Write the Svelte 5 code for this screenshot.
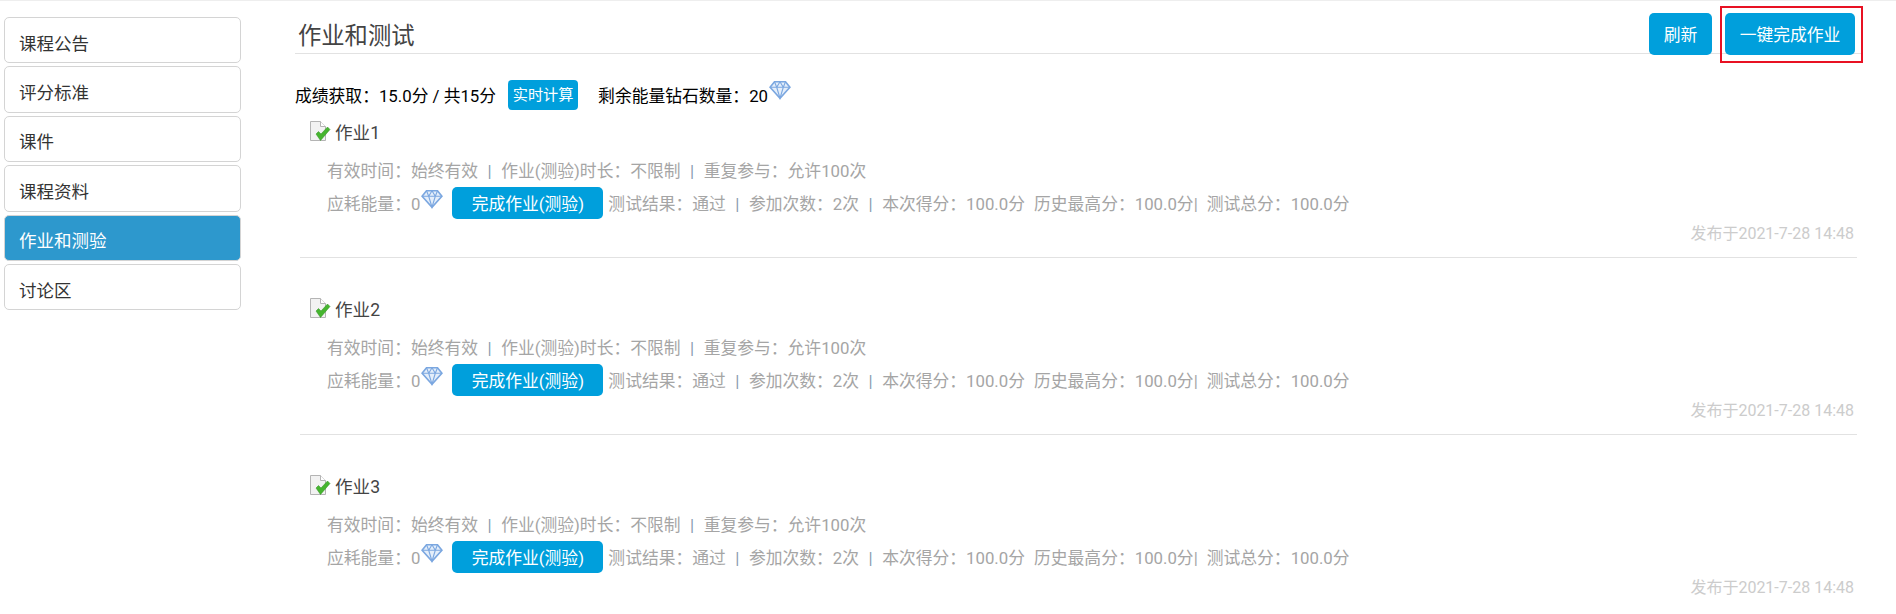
<script>
	const menu = ['课程公告', '评分标准', '课件', '课程资料', '作业和测验', '讨论区'];
	const tasks = ['作业1', '作业2', '作业3'];
</script>

{#snippet diamond()}
	<svg class="gem" viewBox="0 0 20 18" width="22" height="20" fill="none" stroke="#7ba7e0" stroke-width="1.5">
		<path d="M5 1.500h10l4 5-9 10-9-10z" fill="#e4eefa" />
		<path d="M1 6.500h18M7 6.500l3 10 3-10M5 1.500l2 5 3-5 3 5 2-5" stroke-width="1" />
	</svg>
{/snippet}

<div class="page">
	<nav class="side">
		{#each menu as name}
			<a class="menu-item" class:active={name === '作业和测验'} href="#top">{name}</a>
		{/each}
	</nav>

	<main class="main">
		<header class="head">
			<h1>作业和测试</h1>
			<div class="actions">
				<button class="btn">刷新</button>
				<button class="btn wide">一键完成作业</button>
				<span class="mark"></span>
			</div>
		</header>

		<div class="score">
			<span>成绩获取：15.0分 / 共15分</span>
			<span class="badge">实时计算</span>
			<span class="left">剩余能量钻石数量：20</span>
			{@render diamond()}
		</div>

		{#each tasks as task}
			<section class="task">
				<div class="title">
					<svg class="doc" viewBox="0 0 22 22" width="22" height="22">
						<path d="M1.500 1.500h10l5 5v14h-15z" fill="#f2f2f2" stroke="#b4b4b4" />
						<path d="M11.500 1.500v5h5" fill="#fff" stroke="#b4b4b4" />
						<path d="M7 14l2.500-2.500 2.500 2.500L18.500 7l2.500 2.500-9.500 11z" fill="#46b52f" stroke="#2f8f20" stroke-width="0.5" />
					</svg>
					<span>{task}</span>
				</div>
				<div class="line first">有效时间：始终有效<i>|</i>作业(测验)时长：不限制<i>|</i>重复参与：允许100次</div>
				<div class="line second">
					<span>应耗能量：0</span>
					{@render diamond()}
					<button class="do">完成作业(测验)</button>
					<span>测试结果：通过<i>|</i>参加次数：2次<i>|</i>本次得分：100.0分<b></b>历史最高分：100.0分|<b></b>测试总分：100.0分</span>
				</div>
				<div class="date">发布于2021-7-28 14:48</div>
			</section>
		{/each}
	</main>
</div>

<style>
	:global(body) {
		margin: 0;
		background: #fff;
		font-family: Roboto, "Noto Sans CJK SC", sans-serif;
	}

	.page {
		display: flex;
		height: 614px;
		box-sizing: border-box;
		overflow: hidden;
		border-top: 1px solid #eee;
		padding-left: 4px;
	}

	.side {
		width: 237px;
		padding-top: 16px;
		flex: none;
	}

	.menu-item {
		display: flex;
		align-items: center;
		box-sizing: border-box;
		height: 46.4px;
		margin-bottom: 3px;
		padding: 4px 0 0 14px;
		border: 1px solid #d4d4d4;
		border-radius: 5px;
		color: #333;
		font-size: 17.5px;
		text-decoration: none;
	}

	.menu-item.active {
		background: #2d98cd;
		color: #fff;
	}

	.main {
		flex: 1;
		margin-left: 54px;
		margin-right: 34px;
		min-width: 0;
	}

	.head {
		display: flex;
		justify-content: space-between;
		height: 52px;
		border-bottom: 1px solid #e2e2e2;
	}

	h1 {
		margin: 20px 0 0 3px;
		color: #444;
		font-size: 23.3px;
		font-weight: 400;
		line-height: 30px;
	}

	.actions {
		position: relative;
		display: flex;
		gap: 13px;
		margin: 12px 7px 0 0;
		height: 42px;
	}

	.btn {
		width: 63px;
		height: 42px;
		padding: 0;
		border: 0;
		border-radius: 5px;
		background: #009fdc;
		color: #fff;
		font: inherit;
		font-size: 16.8px;
	}

	.btn.wide {
		width: 130px;
	}

	.mark {
		position: absolute;
		left: 71px;
		top: -7px;
		width: 139px;
		height: 53px;
		border: 2px solid #e81123;
	}

	.score {
		display: flex;
		align-items: center;
		height: 30px;
		margin-top: 26px;
		color: #000;
		font-size: 16.8px;
	}

	.badge {
		width: 70px;
		height: 30px;
		margin-left: 12px;
		border-radius: 4px;
		background: #009fdc;
		color: #fff;
		font-size: 15.2px;
		line-height: 30px;
		text-align: center;
	}

	.left {
		margin-left: 20px;
	}

	.score .gem {
		margin: -10px 0 0 1px;
	}

	.task {
		height: 177px;
		box-sizing: border-box;
		margin-right: 5px;
		margin-left: 5px;
		padding-top: 36px;
		border-bottom: 1px solid #e2e2e2;
	}

	.task:first-of-type {
		height: 142px;
		margin-top: 7px;
		padding-top: 0;
	}

	.task:last-of-type {
		border-bottom: 0;
	}

	.title {
		display: flex;
		align-items: center;
		gap: 4px;
		height: 30px;
		margin-top: -1px;
		padding-left: 9px;
		color: #444;
		font-size: 17.6px;
	}

	.doc {
		margin-bottom: 1px;
	}

	.line {
		color: #a5a5a5;
		font-size: 16.8px;
		padding-left: 27px;
		white-space: nowrap;
	}

	.line i {
		margin: 0 9.500px;
		font-style: normal;
		color: #8a9bb0;
	}

	.line b {
		display: inline-block;
		width: 9px;
	}

	.first {
		margin-top: 10px;
		line-height: 30px;
	}

	.second {
		display: flex;
		align-items: center;
		height: 32px;
		margin-top: 1px;
	}

	.second .gem {
		margin: -8px 0 0 1px;
	}

	.do {
		width: 151px;
		height: 32px;
		margin: 0 5px 0 9px;
		padding: 0;
		border: 0;
		border-radius: 5px;
		background: #009fdc;
		color: #fff;
		font: inherit;
		font-size: 16.8px;
	}

	.date {
		margin-top: 5px;
		padding-right: 3px;
		color: #ccc;
		font-size: 16px;
		line-height: 20px;
		text-align: right;
	}
</style>
